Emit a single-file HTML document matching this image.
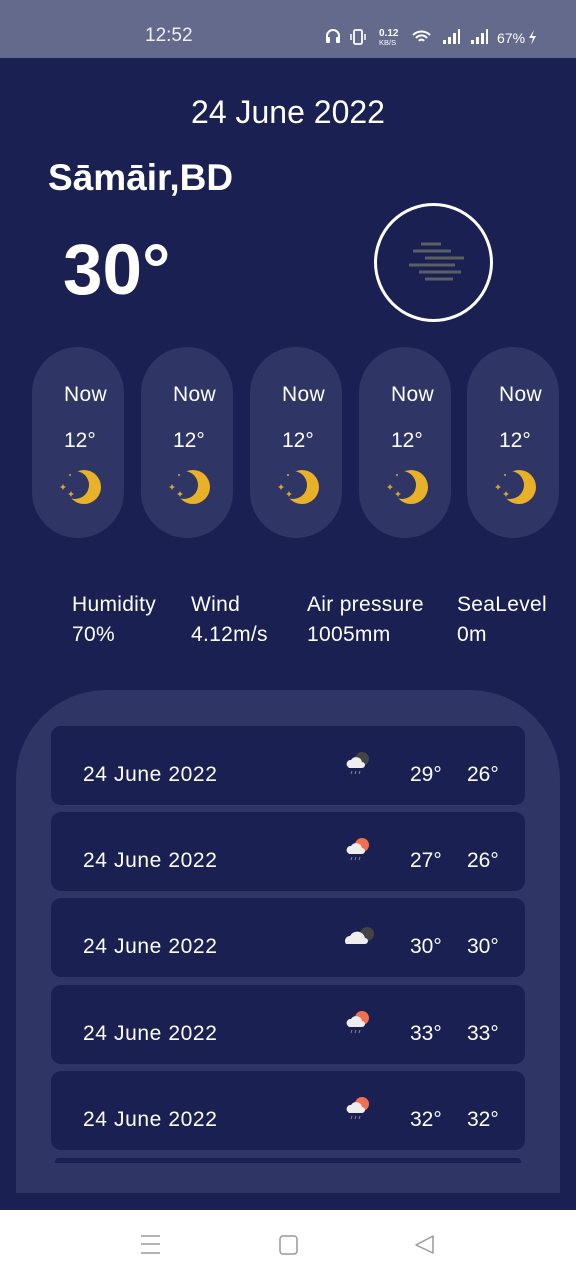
<!DOCTYPE html>
<html><head><meta charset="utf-8"><style>
*{margin:0;padding:0;box-sizing:border-box}
body{width:576px;height:1280px;background:#1a2051;font-family:"Liberation Sans",sans-serif;color:#fff;position:relative;overflow:hidden}
.a{position:absolute;white-space:nowrap}
.sb{left:0;top:0;width:576px;height:58px;background:#636a8c}
.card{position:absolute;top:347px;width:92px;height:191px;border-radius:46px;background:#2f3665}
.card .n{position:absolute;top:36px;left:32px;font-size:21px;letter-spacing:0.3px}
.card .t{position:absolute;top:82px;left:32px;font-size:21px}
.card svg{position:absolute;top:120px;left:26px}
.lbl{font-size:21px;line-height:30px;letter-spacing:0.3px}
.panel{left:16px;top:690px;width:544px;height:503px;background:#2f3665;border-radius:90px 90px 0 0}
.row{position:absolute;left:51px;width:474px;height:79px;background:#1a2051;border-radius:10px}
.row .d{position:absolute;left:32px;top:37px;font-size:21px;letter-spacing:0.6px}
.row .h{position:absolute;left:359px;top:37px;font-size:21px}
.row .l{position:absolute;left:416px;top:37px;font-size:21px}
.row svg{position:absolute;left:292px;top:24px}
.nav{left:0;top:1210px;width:576px;height:70px;background:#fff}
</style></head><body>
<div class="a sb"></div>
<div class="a" style="left:145px;top:25px;font-size:19px;color:#f0f0f5">12:52</div>
<div class="a" style="left:325px;top:27px;font-size:15px;color:#fff">
<svg width="215" height="20" viewBox="0 0 215 20" style="vertical-align:middle">
<path d="M2 14v-5a6 6 0 0 1 12 0v5" stroke="#fff" stroke-width="2" fill="none"/><rect x="1" y="10" width="4" height="6" rx="1" fill="#fff"/><rect x="11" y="10" width="4" height="6" rx="1" fill="#fff"/>
<rect x="29" y="3" width="8" height="14" rx="1.5" stroke="#fff" stroke-width="1.8" fill="none"/><path d="M26 7v6M40 7v6" stroke="#fff" stroke-width="1.5"/>
<text x="54" y="9" font-size="10" font-family="Liberation Sans" fill="#fff" font-weight="bold">0.12</text><text x="54" y="18" font-size="7.5" font-family="Liberation Sans" fill="#fff">KB/S</text>
<path d="M88 8a12 12 0 0 1 17 0M91 11a7 7 0 0 1 11 0M94 14a3 3 0 0 1 5 0" stroke="#fff" stroke-width="2" fill="none"/>
<rect x="118" y="13" width="3" height="4" fill="#fff"/><rect x="123" y="10" width="3" height="7" fill="#fff"/><rect x="128" y="6" width="3" height="11" fill="#fff"/><rect x="133" y="2" width="2" height="15" fill="#fff"/>
<rect x="146" y="13" width="3" height="4" fill="#fff"/><rect x="151" y="10" width="3" height="7" fill="#fff"/><rect x="156" y="6" width="3" height="11" fill="#fff"/><rect x="161" y="2" width="2" height="15" fill="#fff"/>
<text x="172" y="16" font-size="14" font-family="Liberation Sans" fill="#fff">67%</text>
<path d="M209 3l-5 8h4l-2 7 5-9h-4z" fill="#fff"/>
</svg></div>

<div class="a" style="left:0;width:576px;text-align:center;top:94px;font-size:32px">24 June 2022</div>
<div class="a" style="left:48px;top:157px;font-size:37px;font-weight:bold">Sāmāir,BD</div>
<div class="a" style="left:63px;top:230px;font-size:71px;font-weight:bold">30°</div>
<div class="a" style="left:374px;top:203px;width:119px;height:119px;border:3px solid #fff;border-radius:50%"></div>
<svg class="a" style="left:400px;top:240px" width="64" height="44"><g stroke="#5b5e62" stroke-width="3"><path d="M21 4h20M13 11h38M25 18h44M9 25h46M19 32h42M25 39h28"/></g></svg>

<div class="card" style="left:32px"><div class="n">Now</div><div class="t">12°</div><svg width="48" height="40"><circle cx="26" cy="20" r="17" fill="#e8b128"/><circle cx="17" cy="18" r="14" fill="#2f3665"/><g fill="#d8a530"><circle cx="12" cy="8" r="1"/><path d="M5 17l1 2 2 1-2 1-1 2-1-2-2-1 2-1z"/><path d="M13 24l1 2 2 1-2 1-1 2-1-2-2-1 2-1z"/></g></svg></div>
<div class="card" style="left:141px"><div class="n">Now</div><div class="t">12°</div><svg width="48" height="40"><circle cx="26" cy="20" r="17" fill="#e8b128"/><circle cx="17" cy="18" r="14" fill="#2f3665"/><g fill="#d8a530"><circle cx="12" cy="8" r="1"/><path d="M5 17l1 2 2 1-2 1-1 2-1-2-2-1 2-1z"/><path d="M13 24l1 2 2 1-2 1-1 2-1-2-2-1 2-1z"/></g></svg></div>
<div class="card" style="left:250px"><div class="n">Now</div><div class="t">12°</div><svg width="48" height="40"><circle cx="26" cy="20" r="17" fill="#e8b128"/><circle cx="17" cy="18" r="14" fill="#2f3665"/><g fill="#d8a530"><circle cx="12" cy="8" r="1"/><path d="M5 17l1 2 2 1-2 1-1 2-1-2-2-1 2-1z"/><path d="M13 24l1 2 2 1-2 1-1 2-1-2-2-1 2-1z"/></g></svg></div>
<div class="card" style="left:359px"><div class="n">Now</div><div class="t">12°</div><svg width="48" height="40"><circle cx="26" cy="20" r="17" fill="#e8b128"/><circle cx="17" cy="18" r="14" fill="#2f3665"/><g fill="#d8a530"><circle cx="12" cy="8" r="1"/><path d="M5 17l1 2 2 1-2 1-1 2-1-2-2-1 2-1z"/><path d="M13 24l1 2 2 1-2 1-1 2-1-2-2-1 2-1z"/></g></svg></div>
<div class="card" style="left:467px"><div class="n">Now</div><div class="t">12°</div><svg width="48" height="40"><circle cx="26" cy="20" r="17" fill="#e8b128"/><circle cx="17" cy="18" r="14" fill="#2f3665"/><g fill="#d8a530"><circle cx="12" cy="8" r="1"/><path d="M5 17l1 2 2 1-2 1-1 2-1-2-2-1 2-1z"/><path d="M13 24l1 2 2 1-2 1-1 2-1-2-2-1 2-1z"/></g></svg></div>

<div class="a lbl" style="left:72px;top:590px">Humidity<br>70%</div>
<div class="a lbl" style="left:191px;top:590px">Wind<br>4.12m/s</div>
<div class="a lbl" style="left:307px;top:590px">Air pressure<br>1005mm</div>
<div class="a lbl" style="left:457px;top:590px">SeaLevel<br>0m</div>

<div class="a panel"></div>
<div class="row" style="top:726px"><div class="d">24 June 2022</div><svg width="30" height="26"><circle cx="19" cy="9" r="7" fill="#444"/><path d="M5 17a4 4 0 0 1 3-7a6 6 0 0 1 11 2a3 3 0 0 1 0 6H6z" fill="#eee"/><path d="M9 21l-1 3M13 21l-1 3M17 21l-1 3" stroke="#888" stroke-width="1"/></svg><div class="h">29°</div><div class="l">26°</div></div>
<div class="row" style="top:812px"><div class="d">24 June 2022</div><svg width="30" height="26"><circle cx="19" cy="9" r="7" fill="#f07050"/><path d="M5 17a4 4 0 0 1 3-7a6 6 0 0 1 11 2a3 3 0 0 1 0 6H6z" fill="#eee"/><path d="M9 21l-1 3M13 21l-1 3M17 21l-1 3" stroke="#888" stroke-width="1"/></svg><div class="h">27°</div><div class="l">26°</div></div>
<div class="row" style="top:898px"><div class="d">24 June 2022</div><svg width="34" height="26"><circle cx="24" cy="12" r="7" fill="#444"/><path d="M3 22a5 5 0 0 1 4-8a8 8 0 0 1 15 2a3 3 0 0 1 0 6z" fill="#eee"/></svg><div class="h">30°</div><div class="l">30°</div></div>
<div class="row" style="top:985px"><div class="d">24 June 2022</div><svg width="30" height="26"><circle cx="19" cy="9" r="7" fill="#f07050"/><path d="M5 17a4 4 0 0 1 3-7a6 6 0 0 1 11 2a3 3 0 0 1 0 6H6z" fill="#eee"/><path d="M9 21l-1 3M13 21l-1 3M17 21l-1 3" stroke="#888" stroke-width="1"/></svg><div class="h">33°</div><div class="l">33°</div></div>
<div class="row" style="top:1071px"><div class="d">24 June 2022</div><svg width="30" height="26"><circle cx="19" cy="9" r="7" fill="#f07050"/><path d="M5 17a4 4 0 0 1 3-7a6 6 0 0 1 11 2a3 3 0 0 1 0 6H6z" fill="#eee"/><path d="M9 21l-1 3M13 21l-1 3M17 21l-1 3" stroke="#888" stroke-width="1"/></svg><div class="h">32°</div><div class="l">32°</div></div>
<div class="a" style="left:55px;top:1158px;width:466px;height:5px;background:#1a2051;border-radius:4px 4px 0 0"></div>

<div class="a nav"></div>
<svg class="a" style="left:138px;top:1234px" width="300" height="24"><path d="M3 2h19M3 10h19M3 19h19" stroke="#999" stroke-width="1.5"/><rect x="142" y="2" width="17" height="18" rx="3" stroke="#999" stroke-width="1.5" fill="none"/><path d="M295 2L278 11L295 19z" stroke="#999" stroke-width="1.5" fill="none" stroke-linejoin="round"/></svg>
</body></html>
